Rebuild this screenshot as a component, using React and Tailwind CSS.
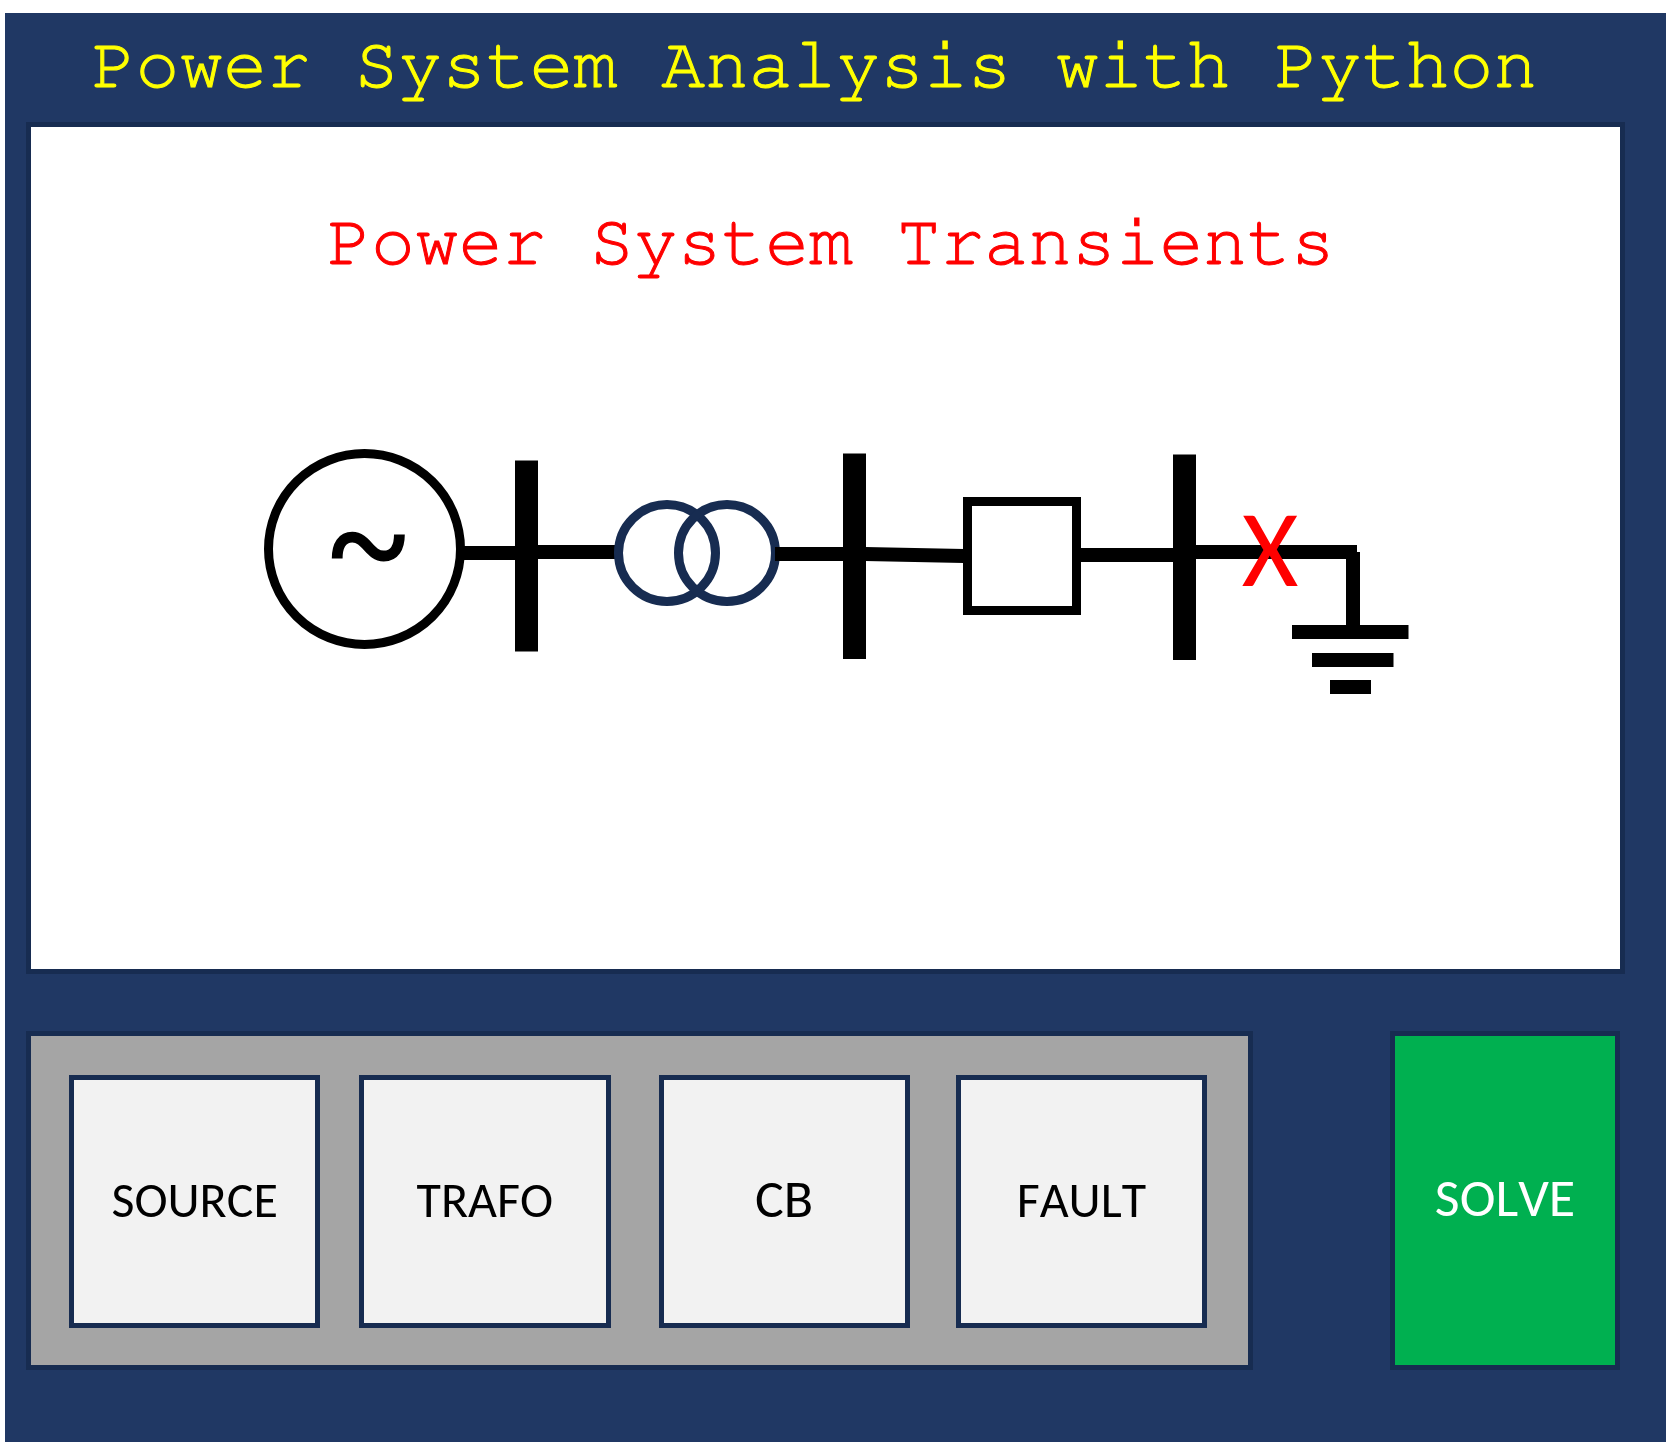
const components = [
  { label: "SOURCE", style: "text-[50px]" },
  { label: "TRAFO", style: "ml-[39px] text-[50px]" },
  { label: "CB", style: "ml-[48px] text-[54px]" },
  { label: "FAULT", style: "ml-[46px] text-[50px]" },
];

function Circuit() {
  return (
    <svg
      viewBox="31 449 1589 248"
      className="block w-full"
      role="img"
      aria-label="Source, transformer, circuit breaker and fault to ground"
    >
      {/* connecting wires */}
      <g stroke="#000" strokeWidth="14">
        <path d="M460 553H516M537 552H617M865 554L964 556M1080 555H1174M1195 552H1357M1353 552V627" />
      </g>

      {/* source with its sine wave */}
      <ellipse cx="364.5" cy="549" rx="96" ry="95.5" fill="#fff" stroke="#000" strokeWidth="9" />
      <path
        d="M337.2 558.6C337.2 545 342.5 537.2 352.3 537.2C366.5 537.2 369.5 556 383.7 556C394 556 399.4 548 399.4 534.4"
        fill="none"
        stroke="#000"
        strokeWidth="10.8"
      />

      {/* transformer */}
      <g fill="none" stroke="#172c51" strokeWidth="9">
        <circle cx="667" cy="553" r="48.5" />
        <circle cx="727" cy="553" r="48.5" />
      </g>
      <path d="M775 554H844" stroke="#000" strokeWidth="14" />

      {/* buses */}
      <rect x="515" y="460.5" width="23" height="191" />
      <rect x="843" y="453.5" width="23" height="205.5" />
      <rect x="1173" y="454.5" width="23" height="205.5" />

      {/* circuit breaker */}
      <rect x="967.5" y="501.5" width="109" height="109" fill="#fff" stroke="#000" strokeWidth="9" />

      {/* ground */}
      <rect x="1292" y="625" width="116.5" height="14" />
      <rect x="1312" y="653" width="81.5" height="14" />
      <rect x="1330" y="680" width="41" height="14" />

      {/* fault */}
      <text
        x="1270"
        y="586"
        textAnchor="middle"
        fill="#f00"
        className="font-[Carlito,Lato,sans-serif] text-[109px]"
      >
        X
      </text>
    </svg>
  );
}

export default function App() {
  return (
    <div className="bg-white px-[5px] pt-[13px] pb-[5px]">
      <main className="bg-[#203864] pr-[41px] pb-[72px] pl-[21px]">
        <h1 className="pt-[13px] pr-[22px] pb-[16px] text-center font-['Nimbus_Mono_PS','FreeMono','Liberation_Mono',monospace] text-[73px] leading-[80px] text-[#ffff00] [-webkit-text-stroke:1px_#ffff00]">
          Power System Analysis with Python
        </h1>

        <section className="min-h-[852px] border-[5px] border-[#172c51] bg-white pt-[76px]">
          <h2 className="mb-[166px] pl-[11px] text-center font-['Nimbus_Mono_PS','FreeMono','Liberation_Mono',monospace] text-[73px] leading-[80px] text-[#ff0000] [-webkit-text-stroke:1px_#ff0000]">
            Power System Transients
          </h2>
          <Circuit />
        </section>

        <div className="mt-[57px] flex gap-[137px] pr-[5px]">
          <div className="flex flex-1 border-[5px] border-[#172c51] bg-[#a5a5a5] pt-[39px] pr-[41px] pb-[37px] pl-[38px]">
            {components.map(({ label, style }) => (
              <button
                key={label}
                type="button"
                className={`h-[253px] min-w-0 flex-1 border-[5px] border-[#172c51] bg-[#f2f2f2] pb-[4px] font-[Carlito,Lato,sans-serif] text-black [font-kerning:none] ${style}`}
              >
                {label}
              </button>
            ))}
          </div>
          <button
            type="button"
            className="w-[230px] border-[5px] border-[#172c51] bg-[#00b050] pb-[4px] font-[Carlito,Lato,sans-serif] text-[54px] text-white [font-kerning:none]"
          >
            SOLVE
          </button>
        </div>
      </main>
    </div>
  );
}
